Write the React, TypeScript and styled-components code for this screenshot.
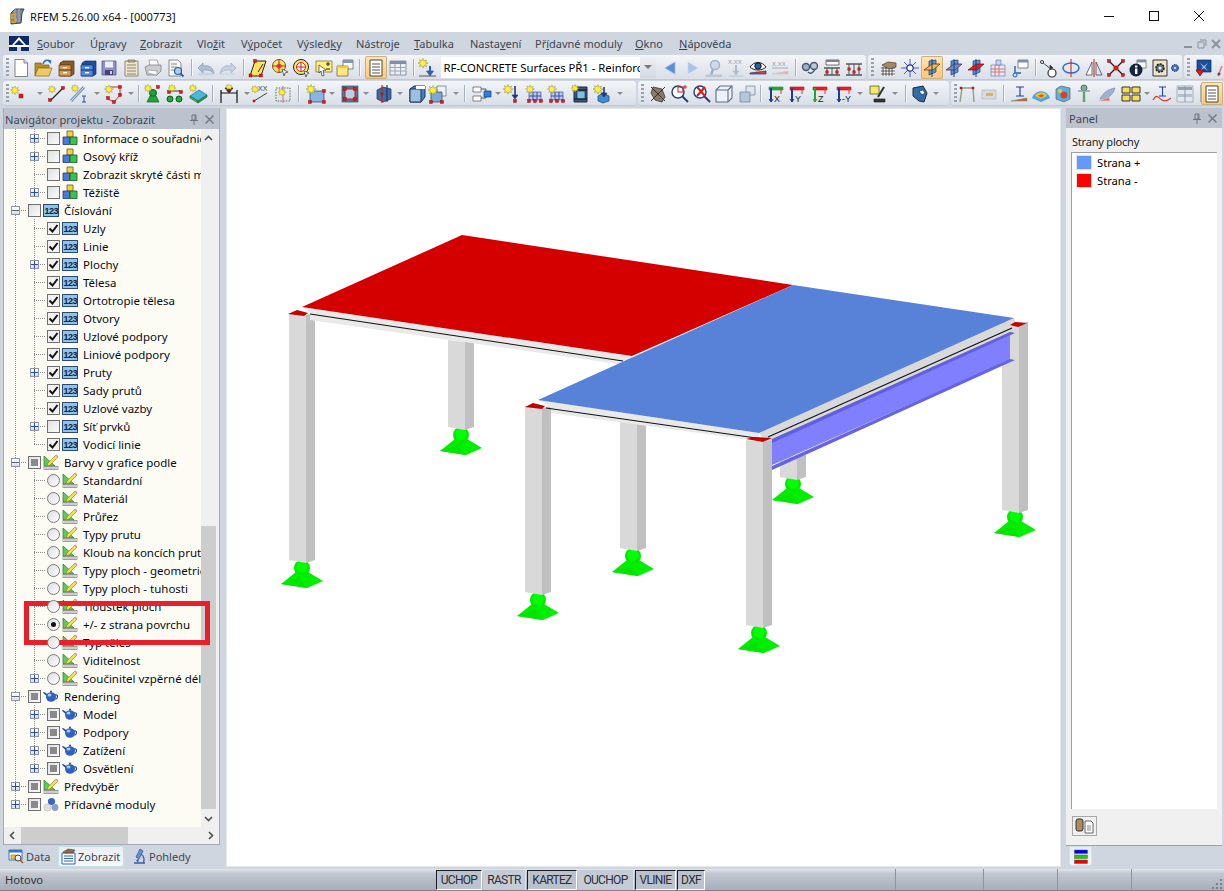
import React from "react";
import styled, { createGlobalStyle } from "styled-components";

const Global = createGlobalStyle`
  html, body { margin: 0; padding: 0; background: #cfd6e0; }
  #root { width: 1224px; height: 891px; overflow: hidden; }
  * { box-sizing: border-box; }
`;

const uiFont = `"Noto Sans", "Open Sans", "Liberation Sans", sans-serif`;

const Page = styled.div`
  position: relative;
  width: 1224px;
  height: 891px;
  display: flex;
  flex-direction: column;
  background: #cfd6e0;
  font-family: ${uiFont};
  font-size: 11.5px;
  color: #000;
  overflow: hidden;
`;

/* ---------- title bar ---------- */
const TitleBar = styled.div`
  height: 32px;
  flex: none;
  background: #fff;
  display: flex;
  align-items: center;
  padding-left: 8px;
  gap: 4px;
  font-size: 11.1px;
  color: #111;
`;
const TitleText = styled.span`
  flex: 1;
`;
const WinButtons = styled.div`
  display: flex;
  height: 100%;
  padding-right: 3px;
`;
const WinButton = styled.div`
  width: 45px;
  display: flex;
  align-items: center;
  justify-content: center;
`;

/* ---------- menu ---------- */
const MenuBar = styled.div`
  height: 23px;
  flex: none;
  position: relative;
  display: flex;
  align-items: center;
  padding-left: 9px;
  background: #cfd6e0;
  color: #3d4450;
`;
const MenuLogo = styled.div`
  width: 20px;
  height: 15px;
  margin-right: 8px;
`;
const MenuItem = styled.span<{ $w: number }>`
  width: ${(p) => p.$w}px;
  white-space: nowrap;
  font-size: 11px;
`;
const MdiControls = styled.div`
  position: absolute;
  right: 3px;
  top: 7px;
  display: flex;
  gap: 4px;
`;

/* ---------- toolbars ---------- */
const ToolRow = styled.div`
  height: 26px;
  flex: none;
  display: flex;
  overflow: hidden;
`;
const Band = styled.div<{ $w: number; $gap: number }>`
  width: ${(p) => p.$w}px;
  margin-left: ${(p) => p.$gap}px;
  flex: none;
  height: 25px;
  display: flex;
  align-items: center;
  border-radius: 3px;
  background: linear-gradient(#f3f5f8 0%, #e6eaf0 45%, #d9dee7 100%);
  box-shadow: inset 0 -1px 0 #c3c9d4;
`;
const Tool = styled.div<{ $gap: number; $active?: boolean }>`
  width: 22px;
  height: 23px;
  flex: none;
  margin-left: ${(p) => p.$gap}px;
  display: flex;
  align-items: center;
  justify-content: center;
  border-radius: 2px;
  ${(p) =>
    p.$active
      ? `background: linear-gradient(#ffe7b5, #ffc66e); box-shadow: inset 0 0 0 1px #c9b083;`
      : ""}
`;
const Sep = styled.div<{ $gap: number }>`
  width: 1px;
  height: 17px;
  flex: none;
  margin-left: ${(p) => p.$gap}px;
  background: #a9b0bd;
  box-shadow: 1px 0 0 #f6f7f9;
`;
const Caret = styled.div<{ $gap: number }>`
  width: 0;
  height: 0;
  flex: none;
  margin-left: ${(p) => p.$gap}px;
  border-left: 3.5px solid transparent;
  border-right: 3.5px solid transparent;
  border-top: 3.5px solid #8c8c8c;
`;
const Grip = styled.div<{ $gap: number }>`
  width: 3px;
  height: 20px;
  flex: none;
  margin-left: ${(p) => p.$gap}px;
  background: repeating-linear-gradient(#9aa2b0 0 2px, transparent 2px 4px);
`;
const Combo = styled.div<{ $gap: number }>`
  width: 215px;
  height: 21px;
  flex: none;
  margin-left: ${(p) => p.$gap}px;
  background: #fff;
  display: flex;
  align-items: center;
  padding-left: 3px;
  font-size: 11.3px;
  overflow: hidden;
  white-space: nowrap;
`;
const ComboText = styled.span`
  flex: 1;
  overflow: hidden;
`;
const ComboArrow = styled.div`
  width: 16px;
  height: 100%;
  flex: none;
  background: linear-gradient(#eef0f4, #d3d8e1);
  display: flex;
  align-items: center;
  justify-content: center;
`;

/* ---------- body ---------- */
const Body = styled.div`
  flex: 1;
  min-height: 0;
  display: flex;
  padding-top: 1px;
`;
const LeftCol = styled.div`
  width: 217px;
  margin-left: 3px;
  flex: none;
  display: flex;
  flex-direction: column;
`;
const DockPanel = styled.div`
  height: 737px;
  flex: none;
  display: flex;
  flex-direction: column;
  background: #f0f0f0;
  border: 1px solid #a4aab5;
  border-top-color: #bcc3cf;
`;
const DockHeader = styled.div<{ $pad: number }>`
  height: 20px;
  flex: none;
  background: #bcc3cf;
  color: #3f4650;
  display: flex;
  align-items: center;
  padding: 0 5px 0 ${(p) => p.$pad}px;
  font-size: 11.1px;
  gap: 6px;
`;
const DockTitle = styled.span`
  flex: 1;
  white-space: nowrap;
`;
const TreeArea = styled.div`
  flex: 1;
  min-height: 0;
  display: flex;
`;
const Tree = styled.div`
  width: 197px;
  flex: none;
  background: #fcfcf4;
  overflow: hidden;
`;
const VScroll = styled.div`
  width: 15px;
  flex: none;
  display: flex;
  flex-direction: column;
  align-items: stretch;
  background: #f0f0f0;
`;
const VSpace = styled.div`
  flex: 1;
`;
const ScrollThumb = styled.div`
  height: 283px;
  flex: none;
  background: #cdcdcd;
`;
const ScrollBtn = styled.div`
  height: 18px;
  flex: none;
  display: flex;
  align-items: center;
  justify-content: center;
`;
const HScroll = styled.div`
  height: 17px;
  flex: none;
  display: flex;
  align-items: center;
  background: #f0f0f0;
`;
const HBtn = styled.div`
  width: 17px;
  height: 100%;
  flex: none;
  display: flex;
  align-items: center;
  justify-content: center;
`;
const HThumb = styled.div`
  width: 107px;
  height: 100%;
  flex: none;
  background: #cdcdcd;
`;
const HSpace = styled.div`
  flex: 1;
`;

const TreeRow = styled.div`
  height: 18px;
  display: flex;
  align-items: center;
  padding-left: 2px;
  white-space: nowrap;
  overflow: hidden;
`;
const dots = `repeating-linear-gradient(#8c8c8c 0 1px, transparent 1px 2px)`;
const hdots = `repeating-linear-gradient(90deg, #8c8c8c 0 1px, transparent 1px 2px)`;
const Cell = styled.div<{ $v?: "full" | "half"; $stub?: boolean }>`
  width: 19px;
  height: 18px;
  flex: none;
  position: relative;
  display: flex;
  align-items: center;
  justify-content: center;
  &::before {
    content: "";
    position: absolute;
    left: 9px;
    top: 0;
    width: 1px;
    height: ${(p) => (p.$v === "full" ? "18px" : p.$v === "half" ? "9px" : "0")};
    background: ${dots};
  }
  &::after {
    content: "";
    position: absolute;
    left: 9px;
    top: 9px;
    width: ${(p) => (p.$stub ? "12px" : "0")};
    height: 1px;
    background: ${hdots};
  }
`;
const Expander = styled.div`
  width: 9px;
  height: 9px;
  position: relative;
  z-index: 1;
  border: 1px solid #8d96a8;
  background: linear-gradient(#fff, #d9dde6);
  display: flex;
  align-items: center;
  justify-content: center;
`;
const CheckBox = styled.div<{ $state: string }>`
  width: 13px;
  height: 13px;
  flex: none;
  margin-left: 3px;
  position: relative;
  z-index: 1;
  border: 1px solid #707070;
  background: ${(p) => (p.$state === "on" ? "#f1f1f1" : "linear-gradient(135deg,#dfe0e4,#fbfbfc)")};
  display: flex;
  align-items: center;
  justify-content: center;
`;
const IndetMark = styled.div`
  width: 7px;
  height: 7px;
  background: #8a8a8a;
`;
const Radio = styled.div`
  width: 13px;
  height: 13px;
  flex: none;
  margin-left: 3px;
  position: relative;
  z-index: 1;
  border: 1px solid #7a7a7a;
  border-radius: 50%;
  background: linear-gradient(135deg, #dcdde2, #fff);
  display: flex;
  align-items: center;
  justify-content: center;
`;
const RadioDot = styled.div`
  width: 5px;
  height: 5px;
  border-radius: 50%;
  background: #111;
`;
const NodeIcon = styled.div`
  width: 16px;
  height: 16px;
  flex: none;
  margin-left: 2px;
  display: flex;
  align-items: center;
  justify-content: center;
`;
const RowLabel = styled.span`
  margin-left: 5px;
  font-size: 11.5px;
  color: #0a0a14;
`;
const Highlight = styled.div`
  position: absolute;
  left: 24px;
  top: 601px;
  width: 186px;
  height: 44px;
  border: 5px solid #e8202c;
  pointer-events: none;
`;

const TabStrip = styled.div`
  height: 22px;
  flex: none;
  display: flex;
  align-items: center;
  padding-left: 3px;
  color: #3f4650;
  font-size: 11px;
`;
const Tab = styled.div<{ $active?: boolean; $w: number; $ml?: number }>`
  width: ${(p) => p.$w}px;
  margin-left: ${(p) => p.$ml ?? 0}px;
  height: 21px;
  flex: none;
  display: flex;
  align-items: center;
  gap: 1px;
  padding-left: 2px;
  border-radius: 0 0 4px 4px;
  ${(p) =>
    p.$active
      ? `background: linear-gradient(#e9edf2,#f7f9fa); box-shadow: inset 0 0 0 1px #c5e0e2;`
      : ""}
`;

const Canvas = styled.div`
  width: 835px;
  height: 759px;
  margin-left: 6px;
  flex: none;
  background: #fff;
  border: 1px solid #e4e7ec;
`;
const ModelSvg = styled.svg`
  display: block;
  width: 833px;
  height: 757px;
`;

const RightCol = styled.div`
  width: 156px;
  margin-left: 5px;
  flex: none;
  display: flex;
  flex-direction: column;
`;
const PanelBody = styled.div`
  height: 718px;
  flex: none;
  background: #f0f0f0;
  padding: 6px 5px 0 5px;
  display: flex;
  flex-direction: column;
  border-bottom: 1px solid #9da3ae;
`;
const PanelCaption = styled.div`
  font-size: 11px;
  height: 18px;
  color: #222;
  line-height: 16px;
  padding-left: 1px;
  letter-spacing: -0.2px;
`;
const LegendBox = styled.div`
  height: 657px;
  flex: none;
  background: #fff;
  border-top: 1px solid #a0a0a0;
  border-left: 1px solid #a0a0a0;
  padding: 0 0 0 4px;
`;
const LegendRow = styled.div`
  height: 18px;
  display: flex;
  align-items: center;
  gap: 5px;
  font-size: 11.2px;
`;
const Swatch = styled.div<{ $c: string }>`
  width: 16px;
  height: 15px;
  background: ${(p) => p.$c};
  border: 1px solid #e2e2e2;
`;
const PanelAction = styled.div`
  width: 25px;
  height: 20px;
  margin-top: 7px;
  margin-left: 1px;
  border: 1px solid #a8a8a8;
  display: flex;
  align-items: center;
  justify-content: center;
`;
const PanelTab = styled.div`
  width: 23px;
  height: 20px;
  margin-left: 3px;
  border-radius: 0 0 4px 4px;
  background: linear-gradient(#e6ebf0, #f7f9fa);
  box-shadow: inset 0 0 0 1px #cfe3e6;
  display: flex;
  align-items: center;
  justify-content: center;
`;

/* ---------- status ---------- */
const StatusBar = styled.div`
  height: 22px;
  flex: none;
  position: relative;
  display: flex;
  align-items: center;
  background: linear-gradient(#e3e6eb 0, #c3c8d1 20%, #b6bcc7 55%, #a8aeba 100%);
  border-bottom: 1px solid #7f8590;
  color: #333;
`;
const StatusText = styled.div`
  width: 436px;
  padding-left: 5px;
  flex: none;
  font-size: 11.2px;
`;
const Pane = styled.div<{ $w: number; $on?: boolean }>`
  width: ${(p) => p.$w}px;
  height: 20px;
  flex: none;
  margin-right: 1px;
  display: flex;
  align-items: center;
  justify-content: center;
  font-family: "Roboto", "Liberation Sans", sans-serif;
  font-size: 12px;
  letter-spacing: -0.7px;
  color: #2a2f38;
  ${(p) =>
    p.$on
      ? `background: #bcc2cc; border-left: 1px solid #1b1d22; border-top: 1px solid #1b1d22; border-right: 1px solid #fff; border-bottom: 1px solid #fff;`
      : `background: #c6ccd5; border-right: 1px solid #dfe2e7;`}
`;
const StatusSlot = styled.div<{ $w: number }>`
  width: ${(p) => p.$w}px;
  height: 100%;
  flex: none;
  border-right: 1px solid #8f95a0;
`;
const ResizeGrip = styled.svg`
  position: absolute;
  right: 1px;
  bottom: 1px;
`;

/* ---------- small drawings ---------- */
const Spark = ({ x = 5, y = 5, s = 1 }: { x?: number; y?: number; s?: number }) => (
  <path
    transform={`translate(${x} ${y}) scale(${s})`}
    d="M0-4.5l1 2.6 2.6-1-1 2.6L5.2 0 2.6 1.1l1 2.6-2.6-1L0 5.2l-1-2.5-2.6 1 1-2.6L-5 0l2.4-.7-1-2.6 2.6 1z"
    fill="#fff03a"
    stroke="#8a8a3a"
    strokeWidth=".5"
  />
);
const Rd = ({ x, y, s = 3 }: { x: number; y: number; s?: number }) => (
  <rect x={x - s / 2} y={y - s / 2} width={s} height={s} fill="#e01818" stroke="#7a0c0c" strokeWidth=".4" />
);
const Ln = ({ d, c = "#333", w = 1 }: { d: string; c?: string; w?: number }) => (
  <path d={d} fill="none" stroke={c} strokeWidth={w} />
);
const Fl = ({ d, c, s = "#555", w = 0.7 }: { d: string; c: string; s?: string; w?: number }) => (
  <path d={d} fill={c} stroke={s} strokeWidth={w} />
);
const cabinet = (a: string, b: string, e: string) => (
  <>
    <Fl d="M7 3h11v13l-3 2H4V5z" c={a} s={e} />
    <Fl d="M3 7h12v11H3z" c={b} s={e} />
    <Ln d="M3 12h12" c={e} />
    <rect x="7" y="9" width="4" height="1.4" fill="#fff" />
    <rect x="7" y="14" width="4" height="1.4" fill="#fff" />
  </>
);
const xyz = (a: string, b: string, l: string) => (
  <>
    <Fl d="M3 3h14v3H3z" c={a} s={a} />
    <Ln d="M5 4v14" c={b} w={2} />
    <Ln d="M5 18l-2-3M5 18l2-3" c={b} />
    <Ln d="M15 4v6" c="#e33" w={1} />
    <text x="8" y="18" fontSize="9" fontFamily="Liberation Sans, sans-serif" fill="#222">
      {l}
    </text>
  </>
);
const plane = (c: string) => (
  <>
    <Fl d="M7 3l7-1v12l-7 3z" c="#5a93d6" s="#123d7a" />
    <Fl d="M2 12l8-6h8l-7 6z" c={c} s="#7a1010" />
    <Ln d="M10 1v18" c="#1a3c80" />
  </>
);
const grid = (
  <>
    <Fl d="M4 8h12v8H4z" c="#b8c9ea" s="#3c50a8" />
    <Ln d="M8 8v8M12 8v8M4 12h12" c="#3c50a8" />
    <Rd x={4} y={17} />
    <Rd x={10} y={17} />
    <Rd x={16} y={17} />
    <Spark x={5} y={5} s={0.9} />
  </>
);

const icons: Record<string, React.ReactNode> = {
  new: (
    <>
      <Fl d="M4 1.5h9l3.5 3.5v13.5H4z" c="#fff" s="#555" />
      <Fl d="M13 1.5V5h3.5" c="#e3e3e3" s="#555" />
    </>
  ),
  open: (
    <>
      <Fl d="M2 5h6l1 2h7v3H5l-3 8z" c="#b98c2c" s="#7c5a14" />
      <Fl d="M2 18l3-8h14l-3 8z" c="#eec962" s="#8a6a1c" />
      <Ln d="M10 6c1-4 5-5 7-2" c="#2d6fc0" w={1.6} />
      <Fl d="M15 2l3 .5-.5 3z" c="#2d6fc0" s="#2d6fc0" />
    </>
  ),
  cabB: cabinet("#8a5c2c", "#d99c52", "#4a2d10"),
  cabBl: cabinet("#1e4da0", "#4f8be0", "#12306c"),
  save: (
    <>
      <Fl d="M3 3h14v14H3z" c="#8f8fcf" s="#4c4c88" />
      <rect x="6" y="3.5" width="8" height="6" fill="#eef0f8" />
      <rect x="6" y="12" width="8" height="5" fill="#44446f" />
      <rect x="11" y="13" width="2" height="3" fill="#cfd0e6" />
    </>
  ),
  notes: (
    <>
      <Fl d="M4 3h13v15H4z" c="#f1e5cb" s="#6b6252" />
      <Ln d="M6 7h9M6 10h9M6 13h9M6 16h9" c="#8a8272" />
      <Fl d="M7 2h7v2H7z" c="#bdb6a6" s="#6b6252" />
    </>
  ),
  print: (
    <>
      <Fl d="M6 2h8l2 6H7z" c="#fbfbfb" s="#8a8a8a" />
      <Fl d="M2 9l4-2h12v6l-4 4H4z" c="#cbcdd4" s="#777" />
      <Fl d="M5 12l9 1v4l-9-2z" c="#fff" s="#999" />
    </>
  ),
  preview: (
    <>
      <Fl d="M3 2h9l3 3v13H3z" c="#f6f6f6" s="#666" />
      <Ln d="M5 6h6M5 9h6M5 12h4" c="#8a8a8a" />
      <circle cx="12" cy="13" r="3.5" fill="#a8cdf0" stroke="#2f5e9c" strokeWidth="1.2" />
      <Ln d="M14.5 15.5l3 3" c="#2f5e9c" w={1.8} />
    </>
  ),
  undo: (
    <>
      <Fl d="M2 10l5-5v3c6-1 10 1 11 8-3-4-6-4-11-4v3z" c="#aebed6" s="#8496b2" />
      <Fl d="M3 15h14v2H3z" c="#c8d2e2" s="#c8d2e2" />
    </>
  ),
  redo: (
    <>
      <Fl d="M18 10l-5-5v3C7 7 3 9 2 16c3-4 6-4 11-4v3z" c="#c6d1e2" s="#9dadc6" />
      <Fl d="M3 15h14v2H3z" c="#d3dbe7" s="#d3dbe7" />
    </>
  ),
  para: (
    <>
      <Fl d="M7 3h11l-5 15H2z" c="#ffe35c" s="#222" w={1} />
      <Ln d="M10 14l5-8" c="#222" />
      <Rd x={7} y={3} />
      <Rd x={2.5} y={17.5} />
      <Rd x={13} y={17.5} />
    </>
  ),
  t1: (
    <>
      <circle cx="9" cy="8" r="6.5" fill="#ffe46a" stroke="#6a5c1a" />
      <circle cx="9" cy="8" r="2.5" fill="#f05050" />
      <Ln d="M9 1v14M2 8h14" c="#c82020" />
      <Fl d="M12 11l6 3-3 1-1 3z" c="#fff" s="#333" />
    </>
  ),
  t2: (
    <>
      <circle cx="9" cy="9" r="7.5" fill="#ffe46a" stroke="#222" />
      <circle cx="9" cy="9" r="4.5" fill="#fff" stroke="#c82020" />
      <Ln d="M9 5v8M5 9h8" c="#c82020" />
      <Fl d="M12 13l5 2-2 1-1 3z" c="#fff" s="#333" />
    </>
  ),
  curBox: (
    <>
      <Fl d="M2 3h16v11H2z" c="#ffee7a" s="#77691c" />
      <Ln d="M12 6h4M14 4v4M12 11h4" c="#222" />
      <Fl d="M5 7l7 5-3 .5 1 5-2 .5-1-5-2 2z" c="#fff" s="#333" />
    </>
  ),
  win: (
    <>
      <Fl d="M8 2h10v9H8z" c="#fff" s="#555" />
      <rect x="8" y="2" width="10" height="3" fill="#8397b2" />
      <Fl d="M2 8h11v10H2z" c="#ffe87a" s="#6a5c1a" />
      <rect x="2" y="8" width="11" height="2" fill="#e8c84a" />
    </>
  ),
  doc: (
    <>
      <Fl d="M4 2h12v16H4z" c="#fff" s="#444" w={1} />
      <Ln d="M6 6h8M6 9h8M6 12h8M6 15h8" c="#555" />
    </>
  ),
  table: (
    <>
      <Fl d="M2 3h16v14H2z" c="#eef0f4" s="#6a7484" />
      <rect x="2" y="3" width="16" height="3" fill="#7f8fa8" />
      <Ln d="M7 6v11M12.5 6v11M2 9.5h16M2 13h16" c="#9aa4b4" />
    </>
  ),
  starDown: (
    <>
      <Spark x={6} y={5} />
      <Ln d="M13 8v8" c="#2b5fb0" w={2} />
      <Fl d="M9.5 13h7L13 18z" c="#2b5fb0" s="#2b5fb0" />
      <Ln d="M2 18h17" c="#555" />
    </>
  ),
  left: <Fl d="M15 4v12L5 10z" c="#5c8edc" s="#9ab9ea" />,
  right: <Fl d="M6 4v12l10-6z" c="#a9c3ea" s="#c9d9f2" />,
  paleP: (
    <>
      <circle cx="11" cy="7" r="4.5" fill="#cfd9e8" stroke="#9fb0c8" strokeWidth="1.4" />
      <Ln d="M9 11l-2 6" c="#9fb0c8" w={2.4} />
      <Fl d="M2 17h16v1.5H2z" c="#b9c4d4" s="#b9c4d4" />
    </>
  ),
  paleX: (
    <>
      <text x="2" y="6" fontSize="6" fontFamily="Liberation Sans, sans-serif" fill="#8f99a8">
        X.XX
      </text>
      <Ln d="M10 7v9" c="#b0bccd" w={2} />
      <Fl d="M7 13h6l-3 4z" c="#b0bccd" s="#b0bccd" />
      <Ln d="M3 18h14" c="#b9c4d4" />
    </>
  ),
  eye: (
    <>
      <path d="M2 9c4-6 12-6 16 0-4 4-12 4-16 0z" fill="#fff" stroke="#222" />
      <circle cx="10" cy="8" r="3.2" fill="#2b5fb0" stroke="#111" />
      <Fl d="M2 15l16-2v3H2z" c="#e04040" s="#2b2b6a" />
    </>
  ),
  paleXx: (
    <>
      <text x="2" y="8" fontSize="6" fontFamily="Liberation Sans, sans-serif" fill="#8f99a8">
        X.XX
      </text>
      <Ln d="M2 10h16" c="#a8a8b4" />
      <Fl d="M2 16l16-3v3z" c="#e7b2b2" s="#ccc" />
    </>
  ),
  glass: (
    <>
      <circle cx="6" cy="9" r="3.5" fill="#9fb2c9" stroke="#48566c" strokeWidth="1.4" />
      <circle cx="14" cy="8" r="3.5" fill="#bdc9d8" stroke="#48566c" strokeWidth="1.4" />
      <Ln d="M8 14c2 2 5 2 7-3" c="#48566c" w={1.4} />
    </>
  ),
  bar1: (
    <>
      <Fl d="M4 2h13v5H4z" c="#fff" s="#333" />
      <rect x="4" y="2" width="13" height="2" fill="#75849c" />
      <Ln d="M2 10h16M2 17h16" c="#111" w={1.2} />
      <Ln d="M5 10v7M10 10v7M15 10v7" c="#555" />
      <Rd x={5} y={14} s={2.4} />
      <Rd x={15} y={14} s={2.4} />
    </>
  ),
  bar2: (
    <>
      <Ln d="M2 6h16M2 17h16" c="#111" w={1.2} />
      <Ln d="M5 6v11M10 6v11M15 6v11" c="#555" />
      <Rd x={5} y={11} s={2.4} />
      <Rd x={10} y={14} s={2.4} />
      <Rd x={15} y={11} s={2.4} />
    </>
  ),
  hand: (
    <>
      <path d="M3 9h14v9H3z" fill="#fff" />
      <Ln d="M3 10h14M3 13h14M3 16h14" c="#333" w={0.8} />
      <Ln d="M5 9v9M8 9v9M11 9v9M14 9v9" c="#333" w={0.8} />
      <Fl d="M4 7l6-3 8 1v4l-7 2z" c="#a9866a" s="#4c3a2a" />
    </>
  ),
  cross: (
    <>
      <Ln d="M10 1v18M1 10h18M4 4l12 12M16 4L4 16" c="#2a3ea0" w={0.8} />
      <circle cx="10" cy="10" r="3.2" fill="#fff" stroke="#1e2f90" strokeWidth="1.2" />
    </>
  ),
  planeA: plane("#e8c040"),
  planeB: plane("#5a93d6"),
  planeC: plane("#e02020"),
  gridz: (
    <>
      <Fl d="M3 7h14v11H3z" c="#e4eaf6" s="#5d7ec2" />
      <Ln d="M7 7v11M11 7v11M3 11h14M3 14h14" c="#e07070" />
      <Fl d="M8 2h5v5H8z" c="#c4d4ec" s="#5d7ec2" />
    </>
  ),
  link: (
    <>
      <Fl d="M8 2h10v8H8z" c="#fff" s="#555" />
      <rect x="8" y="2" width="10" height="2.5" fill="#7f8fa8" />
      <Ln d="M5 8v7h6" c="#2b5fb0" w={1.4} />
      <circle cx="5" cy="17" r="2" fill="#cfe0f5" stroke="#2b5fb0" />
    </>
  ),
  nodes: (
    <>
      <Ln d="M3 4l10 8" c="#333" w={0.9} />
      <circle cx="3" cy="4" r="1.5" fill="#fff" stroke="#333" />
      <Fl d="M11 7l3 3-3 1z" c="#333" s="#333" />
      <circle cx="13" cy="15" r="4" fill="#fff" stroke="#333" strokeWidth="1.2" />
    </>
  ),
  rot: (
    <>
      <ellipse cx="10" cy="10" rx="8" ry="5" fill="none" stroke="#2b6fc0" strokeWidth="1.5" />
      <Ln d="M10 1v18" c="#d01818" w={1} />
    </>
  ),
  mirror: (
    <>
      <Fl d="M8 4v13H2z" c="#fff" s="#333" />
      <Fl d="M12 4v13h6z" c="#dfe4ec" s="#333" />
      <Ln d="M10 1v18" c="#d01818" w={1} />
    </>
  ),
  xmark: (
    <>
      <Ln d="M3 3l14 14M17 3L3 17" c="#222" w={1.4} />
      <circle cx="10" cy="10" r="2.6" fill="#e01818" />
      <Rd x={3} y={3} />
      <Rd x={17} y={3} />
      <Rd x={3} y={17} />
      <Rd x={17} y={17} />
    </>
  ),
  info: (
    <>
      <Fl d="M9 2h9v8H9z" c="#fff" s="#555" />
      <rect x="9" y="2" width="9" height="2.4" fill="#7f8fa8" />
      <circle cx="8" cy="12" r="6.5" fill="#12243e" />
      <rect x="7" y="10.5" width="2.4" height="5.5" fill="#fff" />
      <rect x="7" y="7.5" width="2.4" height="2" fill="#fff" />
    </>
  ),
  gear: (
    <>
      <Fl d="M3 2h14v16H3z" c="#efe3c8" s="#333" w={1} />
      <circle cx="10" cy="10" r="4" fill="#5d6f88" stroke="#222" strokeWidth="1.6" strokeDasharray="2 1" />
      <circle cx="10" cy="10" r="1.5" fill="#fff" />
    </>
  ),
  dotgear: (
    <>
      <circle cx="7" cy="10" r="3.5" fill="#4a6fbe" stroke="#1e3a80" strokeDasharray="1.5 1" />
      <circle cx="7" cy="10" r="1" fill="#fff" />
    </>
  ),
  blueSq: (
    <>
      <Fl d="M4 2h14v12H4z" c="#18509c" s="#0c2d60" />
      <path d="M7 5l4 3 4-3-3 4 3 4-4-3-4 3 3-4z" fill="#9cc4ee" />
      <Fl d="M3 12h8l-4 6z" c="#e01818" s="#7a0c0c" />
    </>
  ),
  edge: (
    <>
      <Ln d="M6 18l4-10" c="#b88" w={1.4} />
      <Rd x={7} y={16} s={2} />
    </>
  ),
  node: (
    <>
      <Spark x={5} y={6} s={0.9} />
      <Rd x={11} y={12} s={4} />
    </>
  ),
  line: (
    <>
      <Ln d="M4 17L17 4" c="#222" w={1.2} />
      <Rd x={4} y={16} />
      <Rd x={17} y={4} />
      <Spark x={6} y={5} s={0.8} />
    </>
  ),
  bar: (
    <>
      <Ln d="M2 17L15 3" c="#7890b0" w={3} />
      <Ln d="M2 17L15 3" c="#dfe8f4" w={1} />
      <Ln d="M13 12h4M15 12v6M13 18h4" c="#30489c" w={1} />
      <Spark x={6} y={4} s={0.8} />
    </>
  ),
  poly: (
    <>
      <Ln d="M6 3h10v8l-6 7-6-3" c="#c83030" w={1} />
      <Rd x={16} y={3} />
      <Rd x={16} y={11} />
      <Rd x={10} y={18} />
      <Rd x={4} y={14} />
      <Spark x={5} y={5} s={0.9} />
    </>
  ),
  person: (
    <>
      <circle cx="10" cy="9" r="3.5" fill="#1fa53a" stroke="#0c5a1c" />
      <Fl d="M4 18l3-6h6l3 6z" c="#1fa53a" s="#0c5a1c" />
      <Spark x={5} y={4} s={0.8} />
      <Rd x={15} y={3} s={3} />
    </>
  ),
  three: (
    <>
      <Ln d="M4 7h11" c="#333" />
      <Rd x={4} y={8} />
      <Rd x={16} y={8} />
      <circle cx="5" cy="15" r="3" fill="#26a83e" stroke="#0c5a1c" />
      <circle cx="14" cy="15" r="3" fill="#26a83e" stroke="#0c5a1c" />
      <Spark x={7} y={4} s={0.8} />
    </>
  ),
  surfSup: (
    <>
      <Fl d="M2 12l9-6 8 5-9 6z" c="#49b9e0" s="#1e6a8a" />
      <Fl d="M2 12l8 5v2l-8-5z" c="#3cbc50" s="#1e6a3a" />
      <Fl d="M10 17l9-6v2l-9 6z" c="#2d9c40" s="#1e6a3a" />
      <Spark x={5} y={4} s={0.8} />
    </>
  ),
  dim: (
    <>
      <Ln d="M2 6v13M18 6v13" c="#111" w={1.2} />
      <Ln d="M2 9h16" c="#111" />
      <Fl d="M6 4h8l-4 5z" c="#222" s="#222" />
      <Spark x={10} y={3} s={0.7} />
      <Rd x={10} y={6} s={2} />
    </>
  ),
  xxd: (
    <>
      <text x="7" y="7" fontSize="7" fontFamily="Liberation Sans, sans-serif" fill="#444">
        XX
      </text>
      <Ln d="M3 17L16 9" c="#444" w={1} />
      <Spark x={4} y={5} s={0.8} />
      <Rd x={3} y={17} s={2} />
    </>
  ),
  dotted: (
    <>
      <rect x="3" y="4" width="14" height="13" fill="none" stroke="#6a6a5a" strokeDasharray="1.5 1.2" />
      <Ln d="M10 2v17" c="#a67" w={0.8} />
      <Spark x={9} y={8} s={0.8} />
    </>
  ),
  surf: (
    <>
      <Fl d="M4 7h14v11H4z" c="#8cb4e2" s="#25446e" />
      <Rd x={4} y={18} />
      <Rd x={18} y={18} />
      <Rd x={18} y={7} />
      <Spark x={5} y={5} />
    </>
  ),
  redSq: (
    <>
      <Fl d="M2 2h16v16H2z" c="#5a7594" s="#3a4f68" />
      <Fl d="M5 5h10v10H5z" c="#bcd0e6" s="#c02020" w={1} />
      <Rd x={5} y={5} />
      <Rd x={15} y={5} />
      <Rd x={5} y={15} />
      <Rd x={15} y={15} />
    </>
  ),
  arrowsCube: (
    <>
      <Fl d="M3 6l6-3 8 2v10l-8 3-6-3z" c="#3f6a9a" s="#21344e" />
      <Ln d="M8 1v18" c="#d02020" w={1.2} />
      <Ln d="M13 1v17" c="#1e3a80" w={1.2} />
      <Rd x={8} y={10} s={2} />
    </>
  ),
  cube: (
    <>
      <Fl d="M3 5l4-3h11v11l-4 5H3z" c="#3f82c0" s="#1a3552" w={1} />
      <Fl d="M3 5h11v13H3z" c="#9cc0e2" s="#1a3552" w={1} />
      <rect x="9" y="2" width="9" height="3" fill="#fff" />
    </>
  ),
  stack: (
    <>
      <Fl d="M9 2h9v10H9z" c="#eef2f8" s="#5a6a80" />
      <Fl d="M3 8h11v10H3z" c="#7ea8d6" s="#243f60" />
      <Rd x={3} y={18} />
      <Rd x={14} y={18} />
      <Spark x={5} y={6} />
    </>
  ),
  trans: (
    <>
      <Fl d="M1 3h8v5H1z" c="#fff" s="#555" />
      <Fl d="M1 12h8v5H1z" c="#fff" s="#555" />
      <Ln d="M9 5h5v9H9" c="#555" />
      <Fl d="M12 7h7v6h-7z" c="#2f7fd6" s="#15427e" />
    </>
  ),
  starArrow: (
    <>
      <Spark x={6} y={5} />
      <Ln d="M13 2v12" c="#1e3a80" w={1.6} />
      <Fl d="M10 11h6l-3 4z" c="#1e3a80" s="#1e3a80" />
      <Rd x={13} y={17} />
    </>
  ),
  gridA: grid,
  gridB: grid,
  machine: (
    <>
      <Fl d="M4 3h13v15H4z" c="#3d5878" s="#1d2c40" w={1} />
      <Fl d="M7 7h8v8H7z" c="#7fc0ea" s="#1d2c40" />
      <Ln d="M4 6h13M4 15h13" c="#111" />
      <Spark x={5} y={4} s={0.8} />
    </>
  ),
  tank: (
    <>
      <Fl d="M6 12l5-3 6 3v5l-6 2-5-2z" c="#3e8ed0" s="#1a4470" />
      <Ln d="M12 3v9" c="#1e3a80" w={1.6} />
      <Fl d="M9 9h6l-3 4z" c="#1e3a80" s="#1e3a80" />
      <Spark x={6} y={5} />
    </>
  ),
  handTool: (
    <>
      <Fl d="M5 3l9 2 3 8-3 5-7-2-4-7z" c="#8a7a66" s="#2a2a2a" />
      <Ln d="M3 3l14 14M17 3L3 17" c="#333" w={1} />
    </>
  ),
  zoomBox: (
    <>
      <circle cx="8" cy="8" r="6" fill="#fff" stroke="#1e3f7a" strokeWidth="1.4" />
      <Ln d="M12 12l6 6" c="#1e3f7a" w={2} />
      <rect x="8" y="3" width="5" height="5" fill="none" stroke="#d02020" />
      <Ln d="M15 1v4M13 3h4" c="#d02020" />
    </>
  ),
  zoomX: (
    <>
      <circle cx="8" cy="8" r="6" fill="#fff" stroke="#1e3f7a" strokeWidth="1.4" />
      <Ln d="M12 12l6 6" c="#1e3f7a" w={2} />
      <Ln d="M5 3l8 9M13 3l-8 9" c="#d81818" w={2} />
    </>
  ),
  wire: (
    <>
      <Fl d="M2 6l4-4h12v12l-4 4H2z" c="#eef2f8" s="#5a6f8a" w={1.1} />
      <Ln d="M2 6h12v12M14 6l4-4" c="#5a6f8a" w={1.1} />
    </>
  ),
  cubes: (
    <>
      <Fl d="M9 2h9v9H9z" c="#dfe5ee" s="#6a7f9a" />
      <Fl d="M3 8h10v10H3z" c="#b4c5dc" s="#6a7f9a" />
    </>
  ),
  axX: xyz("#18a83c", "#1e3a9c", "X"),
  axY: xyz("#d82020", "#1e3a9c", "Y"),
  axZ: xyz("#d82020", "#18a83c", "Z"),
  axmY: xyz("#d82020", "#1e3a9c", "-Y"),
  micro: (
    <>
      <Fl d="M2 2h9v8H2z" c="#f7ea5c" s="#444" />
      <Ln d="M16 3l-6 10" c="#333" w={2} />
      <Fl d="M6 15h11v3H6z" c="#333" s="#222" />
    </>
  ),
  blueShape: (
    <>
      <Fl d="M3 4l10-2 4 7-3 9-5-1-6-5z" c="#2f6ca8" s="#12304e" w={1} />
      <Fl d="M9 7l4-1 2 3-3 2z" c="#fff" s="#12304e" />
    </>
  ),
  paleFrame: (
    <>
      <Ln d="M4 18L6 4h11l1 14" c="#8ea084" w={1.4} />
      <Rd x={5} y={4} s={2} />
      <Rd x={17} y={4} s={2} />
    </>
  ),
  paleTag: (
    <>
      <Fl d="M3 6h14v9H3z" c="#d7d9de" s="#b4b8c0" />
      <rect x="7" y="9" width="7" height="3" fill="#e0b060" />
    </>
  ),
  iBeam: (
    <>
      <Ln d="M7 3h8M11 3v9M7 12h8" c="#2a3ea0" w={1.2} />
      <Fl d="M2 17l16-3v3z" c="#e05050" s="#3a5" w={0.5} />
    </>
  ),
  mesh: (
    <>
      <path d="M1 14c3-9 15-9 18 0l-9 4z" fill="#49a6e0" />
      <path d="M4 12c3-5 10-5 12 0l-6 3z" fill="#e8c23c" />
      <path d="M7 12c2-2 5-2 6 0l-3 1.5z" fill="#e05038" />
    </>
  ),
  colorCube: (
    <>
      <Fl d="M3 5l5-3 9 2v11l-6 3-8-3z" c="#5fb0d8" s="#567" />
      <circle cx="11" cy="11" r="3.5" fill="#d84030" />
      <circle cx="7" cy="7" r="2" fill="#e0d040" />
    </>
  ),
  greenFig: (
    <>
      <circle cx="9" cy="4" r="3" fill="#7fb08a" stroke="#567" />
      <Ln d="M9 8v10" c="#58a868" w={2.4} />
      <Ln d="M3 7l12 0" c="#8a9aa8" w={1.4} />
    </>
  ),
  leaf: (
    <>
      <Fl d="M3 15c4-8 10-10 15-11-2 7-7 11-15 11z" c="#9fb2d6" s="#7a8cae" />
      <Fl d="M2 17l10-4 1 4z" c="#e07878" s="#ccc" />
    </>
  ),
  foursq: (
    <>
      <Fl d="M1 3h8v6H1z" c="#f6df58" s="#333" w={1} />
      <Fl d="M11 3h8v6h-8z" c="#f6df58" s="#333" w={1} />
      <Fl d="M1 11h8v6H1z" c="#f6df58" s="#333" w={1} />
      <Fl d="M11 11h8v6h-8z" c="#f6df58" s="#333" w={1} />
    </>
  ),
  iWave: (
    <>
      <Ln d="M7 3h7M10.5 3v9M7 12h7" c="#2a3ea0" w={1.1} />
      <Ln d="M1 16c4-7 5-2 9 0 4 2 6 0 9-2" c="#d83030" w={1.1} />
    </>
  ),
  tbl2: (
    <>
      <Fl d="M2 2h16v16H2z" c="#e4e8ee" s="#8f99a8" />
      <rect x="3" y="3" width="14" height="3" fill="#94a2b6" />
      <rect x="3" y="10" width="14" height="3" fill="#b4becd" />
      <Ln d="M10 2v16" c="#8f99a8" />
    </>
  ),
};

type Item = [string, number];
type BandDef = { left: number; right: number; items: Item[] };

const sizes: Record<string, number> = { sep: 1, caret: 7, grip: 3, combo: 215 };

const r1: BandDef[] = [
  {
    left: 3,
    right: 866,
    items: [
      ["grip", 7], ["new", 21], ["open", 43], ["cabB", 66], ["cabBl", 88], ["save", 109], ["notes", 131], ["print", 153], ["preview", 176],
      ["sep", 191], ["undo", 206], ["redo", 228], ["sep", 243], ["para", 258], ["t1", 280], ["t2", 302], ["curBox", 324], ["win", 345],
      ["sep", 359], ["*doc", 376], ["table", 398], ["sep", 413], ["starDown", 427], ["combo", 548], ["left", 670], ["right", 692],
      ["paleP", 714], ["paleX", 736], ["eye", 758], ["paleXx", 780], ["sep", 795], ["glass", 810], ["bar1", 832], ["bar2", 854],
    ],
  },
  {
    left: 868,
    right: 1182,
    items: [
      ["grip", 872], ["hand", 888], ["cross", 910], ["*planeA", 932], ["planeB", 954], ["planeC", 976], ["gridz", 998], ["link", 1020],
      ["sep", 1035], ["nodes", 1049], ["rot", 1071], ["mirror", 1094], ["xmark", 1116], ["info", 1138], ["gear", 1160], ["dotgear", 1178],
    ],
  },
  {
    left: 1184,
    right: 1224,
    items: [["grip", 1188], ["blueSq", 1203], ["edge", 1222]],
  },
];
const r2: BandDef[] = [
  {
    left: 3,
    right: 636,
    items: [
      ["grip", 7], ["node", 20], ["caret", 40], ["line", 57], ["bar", 80], ["caret", 98], ["poly", 116], ["caret", 133], ["sep", 141],
      ["person", 156], ["three", 178], ["surfSup", 201], ["sep", 215], ["dim", 232], ["caret", 250], ["xxd", 265], ["dotted", 287], ["sep", 302],
      ["surf", 320], ["caret", 336], ["redSq", 355], ["caret", 371], ["arrowsCube", 390], ["caret", 406], ["cube", 424], ["stack", 445], ["caret", 463],
      ["sep", 472], ["trans", 490], ["caret", 506], ["starArrow", 521], ["gridA", 544], ["gridB", 566], ["machine", 589], ["tank", 611], ["caret", 629],
    ],
  },
  {
    left: 638,
    right: 949,
    items: [
      ["grip", 642], ["handTool", 658], ["zoomBox", 680], ["zoomX", 702], ["wire", 724], ["cubes", 747], ["sep", 760], ["axX", 776], ["axY", 797],
      ["axZ", 820], ["axmY", 844], ["caret", 860], ["micro", 879], ["caret", 896], ["sep", 907], ["blueShape", 922], ["caret", 938],
    ],
  },
  {
    left: 951,
    right: 1224,
    items: [
      ["grip", 955], ["paleFrame", 966], ["paleTag", 989], ["sep", 1003], ["iBeam", 1019], ["mesh", 1041], ["colorCube", 1063], ["greenFig", 1085],
      ["leaf", 1107], ["foursq", 1131], ["caret", 1147], ["iWave", 1163], ["tbl2", 1186], ["sep", 1201], ["*doc", 1213],
    ],
  },
];

const Ico = ({ k }: { k: string }) => (
  <svg width="20" height="20" viewBox="0 0 20 20">
    {icons[k]}
  </svg>
);

const ToolBand = ({ def, prevRight }: { def: BandDef; prevRight: number }) => {
  let cursor = def.left;
  return (
    <Band $w={def.right - def.left} $gap={def.left - prevRight}>
      {def.items.map(([name, center], i) => {
        const base = name.replace("*", "");
        const w = sizes[base] ?? 22;
        const gap = center - w / 2 - cursor;
        cursor = center + w / 2;
        if (base === "sep") return <Sep key={i} $gap={gap} />;
        if (base === "caret") return <Caret key={i} $gap={gap} />;
        if (base === "grip") return <Grip key={i} $gap={gap} />;
        if (base === "combo")
          return (
            <Combo key={i} $gap={gap}>
              <ComboText>RF-CONCRETE Surfaces PŘ1 - Reinforce</ComboText>
              <ComboArrow>
                <svg width="8" height="5">
                  <path d="M0 0h8L4 4z" fill="#777" />
                </svg>
              </ComboArrow>
            </Combo>
          );
        return (
          <Tool key={i} $gap={gap} $active={name.startsWith("*")}>
            <Ico k={base} />
          </Tool>
        );
      })}
    </Band>
  );
};

const ToolRowView = ({ bands }: { bands: BandDef[] }) => (
  <ToolRow>
    {bands.map((b, i) => (
      <ToolBand key={i} def={b} prevRight={i ? bands[i - 1].right : 0} />
    ))}
  </ToolRow>
);

/* tree icons */
const CubesIcon = () => (
  <svg width="16" height="16" viewBox="0 0 16 16">
    <path d="M5 1h6v6H5z" fill="#f4d040" stroke="#6a5c1a" strokeWidth=".8" />
    <path d="M1 7h6.5v7.5H1z" fill="#4c78d8" stroke="#1c3a80" strokeWidth=".8" />
    <path d="M8 7h7v7.5H8z" fill="#3ec050" stroke="#155c22" strokeWidth=".8" />
  </svg>
);
const NumIcon = () => (
  <svg width="16" height="13" viewBox="0 0 16 13">
    <rect x=".5" y=".5" width="15" height="12" fill="#8cc4ee" stroke="#2c4a70" />
    <text x="1.6" y="10" fontSize="9" fontWeight="700" fontFamily="Liberation Sans, sans-serif" fill="#123" letterSpacing="-.5">
      123
    </text>
  </svg>
);
const ChartIcon = () => (
  <svg width="16" height="16" viewBox="0 0 16 16">
    <path d="M1 12V2l11 10z" fill="#5fc85a" stroke="#2a7a2a" strokeWidth=".7" />
    <path d="M5 9l8-8 2 2-8 8-3 1z" fill="#f4e04a" stroke="#8a7a20" strokeWidth=".6" />
    <path d="M13 1l2 2" stroke="#e090c0" strokeWidth="1.4" />
    <rect x="1" y="12.5" width="14" height="3" fill="#fff" stroke="#777" strokeWidth=".7" />
    <path d="M3 13v2M5 13v2M7 13v2M9 13v2M11 13v2M13 13v2" stroke="#555" strokeWidth=".6" />
  </svg>
);
const TeapotIcon = () => (
  <svg width="16" height="14" viewBox="0 0 16 14">
    <ellipse cx="8" cy="8" rx="5" ry="4.8" fill="#2e62c0" />
    <ellipse cx="6.5" cy="6" rx="2" ry="1.6" fill="#a9c8f4" />
    <path d="M3.5 7C1 4 .5 5 0 3c2 0 3 1 4.5 2.5z" fill="#1f4aa0" />
    <path d="M12 6c3-1 3.5 3 .5 4.5" fill="none" stroke="#1f4aa0" strokeWidth="1.3" />
    <circle cx="8" cy="2.5" r="1" fill="#1f4aa0" />
  </svg>
);
const ModulesIcon = () => (
  <svg width="16" height="15" viewBox="0 0 16 15">
    <circle cx="8.5" cy="4.5" r="3.6" fill="#3a66c4" />
    <circle cx="4.5" cy="10.5" r="3.6" fill="#dfe0e4" stroke="#aaa" strokeWidth=".5" />
    <circle cx="12" cy="10.5" r="3.4" fill="#8aa0c8" />
  </svg>
);
const treeIcons: Record<string, React.ReactNode> = {
  c: <CubesIcon />,
  n: <NumIcon />,
  b: <ChartIcon />,
  t: <TeapotIcon />,
  m: <ModulesIcon />,
};

type Node = {
  label: string;
  d: 0 | 1;
  ic: string;
  st: string;
  ex?: "+" | "-";
  last?: boolean;
};

const nodes: Node[] = [
  { label: "Informace o souřadnicích", d: 1, ic: "c", st: "off", ex: "+" },
  { label: "Osový kříž", d: 1, ic: "c", st: "off", ex: "+" },
  { label: "Zobrazit skryté části modelu", d: 1, ic: "c", st: "off" },
  { label: "Těžiště", d: 1, ic: "c", st: "off", ex: "+", last: true },
  { label: "Číslování", d: 0, ic: "n", st: "off", ex: "-" },
  { label: "Uzly", d: 1, ic: "n", st: "on" },
  { label: "Linie", d: 1, ic: "n", st: "on" },
  { label: "Plochy", d: 1, ic: "n", st: "on", ex: "+" },
  { label: "Tělesa", d: 1, ic: "n", st: "on" },
  { label: "Ortotropie tělesa", d: 1, ic: "n", st: "on" },
  { label: "Otvory", d: 1, ic: "n", st: "on" },
  { label: "Uzlové podpory", d: 1, ic: "n", st: "on" },
  { label: "Liniové podpory", d: 1, ic: "n", st: "on" },
  { label: "Pruty", d: 1, ic: "n", st: "on", ex: "+" },
  { label: "Sady prutů", d: 1, ic: "n", st: "on" },
  { label: "Uzlové vazby", d: 1, ic: "n", st: "on" },
  { label: "Síť prvků", d: 1, ic: "n", st: "off", ex: "+" },
  { label: "Vodicí linie", d: 1, ic: "n", st: "on", last: true },
  { label: "Barvy v grafice podle", d: 0, ic: "b", st: "mix", ex: "-" },
  { label: "Standardní", d: 1, ic: "b", st: "radio" },
  { label: "Materiál", d: 1, ic: "b", st: "radio" },
  { label: "Průřez", d: 1, ic: "b", st: "radio" },
  { label: "Typy prutu", d: 1, ic: "b", st: "radio" },
  { label: "Kloub na koncích prutů", d: 1, ic: "b", st: "radio" },
  { label: "Typy ploch - geometrie", d: 1, ic: "b", st: "radio" },
  { label: "Typy ploch - tuhosti", d: 1, ic: "b", st: "radio" },
  { label: "Tloušťek ploch", d: 1, ic: "b", st: "radio" },
  { label: "+/- z strana povrchu", d: 1, ic: "b", st: "dot" },
  { label: "Typ těles", d: 1, ic: "b", st: "radio" },
  { label: "Viditelnost", d: 1, ic: "b", st: "radio" },
  { label: "Součinitel vzpěrné délky", d: 1, ic: "b", st: "radio", ex: "+", last: true },
  { label: "Rendering", d: 0, ic: "t", st: "mix", ex: "-" },
  { label: "Model", d: 1, ic: "t", st: "mix", ex: "+" },
  { label: "Podpory", d: 1, ic: "t", st: "mix", ex: "+" },
  { label: "Zatížení", d: 1, ic: "t", st: "mix", ex: "+" },
  { label: "Osvětlení", d: 1, ic: "t", st: "mix", ex: "+", last: true },
  { label: "Předvýběr", d: 0, ic: "b", st: "mix", ex: "+" },
  { label: "Přídavné moduly", d: 0, ic: "m", st: "mix", ex: "+", last: true },
];

const ExpBox = ({ sign }: { sign: "+" | "-" }) => (
  <Expander>
    <svg width="7" height="7" viewBox="0 0 7 7">
      <path d={sign === "+" ? "M0 3.5h7M3.5 0v7" : "M0 3.5h7"} stroke={sign === "+" ? "#2a4ca8" : "#5a6478"} strokeWidth="1" />
    </svg>
  </Expander>
);

const StateMark = ({ st }: { st: string }) => {
  if (st === "radio") return <Radio />;
  if (st === "dot")
    return (
      <Radio>
        <RadioDot />
      </Radio>
    );
  return (
    <CheckBox $state={st}>
      {st === "on" && (
        <svg width="11" height="11" viewBox="0 0 11 11">
          <path d="M1.5 5.5l3 3 5-6.5" fill="none" stroke="#111" strokeWidth="2" />
        </svg>
      )}
      {st === "mix" && <IndetMark />}
    </CheckBox>
  );
};

const TreeNode = ({ n }: { n: Node }) => (
  <TreeRow>
    {n.d === 1 ? (
      <>
        <Cell $v="full" />
        <Cell $v={n.last ? "half" : "full"} $stub>
          {n.ex && <ExpBox sign={n.ex} />}
        </Cell>
      </>
    ) : (
      <Cell $v={n.last ? "half" : "full"} $stub>
        {n.ex && <ExpBox sign={n.ex} />}
      </Cell>
    )}
    <StateMark st={n.st} />
    <NodeIcon>{treeIcons[n.ic]}</NodeIcon>
    <RowLabel>{n.label}</RowLabel>
  </TreeRow>
);

const Pin = ({ c = "#6f7682" }: { c?: string }) => (
  <svg width="10" height="11" viewBox="0 0 10 11">
    <path d="M3 1h4v5H3zM1 6.500h8M5 7v4M6 1v5" fill="none" stroke={c} strokeWidth="1" />
  </svg>
);
const Close = ({ c = "#6f7682" }: { c?: string }) => (
  <svg width="9" height="9" viewBox="0 0 9 9">
    <path d="M.5.5l8 8M8.5.5l-8 8" stroke={c} strokeWidth="1.3" />
  </svg>
);
const Chev = ({ d }: { d: string }) => (
  <svg width="9" height="9" viewBox="0 0 9 9">
    <path d={d} fill="none" stroke="#505050" strokeWidth="1.6" />
  </svg>
);

/* 3D model, in page coordinates */
type Col = { x: number; top: number; bottom: number; ball: number };
const cols: Col[] = [
  { x: 289, top: 313, bottom: 560, ball: 568 },
  { x: 448, top: 340, bottom: 427, ball: 435 },
  { x: 525, top: 406, bottom: 592, ball: 600 },
  { x: 620, top: 420, bottom: 548, ball: 556 },
  { x: 780, top: 455, bottom: 477, ball: 484 },
  { x: 1002, top: 322, bottom: 510, ball: 517 },
];
const front: Col = { x: 746, top: 440, bottom: 625, ball: 633 };

const Column = ({ c }: { c: Col }) => {
  const mid = c.x + 17;
  const right = c.x + 26;
  const cx = c.x + 13;
  return (
    <g>
      <polygon
        points={`${cx - 21},${c.ball + 16} ${cx - 6},${c.ball + 4} ${cx + 6},${c.ball + 4} ${cx + 21},${c.ball + 13} ${cx + 5},${c.ball + 20}`}
        fill="#00ee00"
      />
      <polygon points={`${cx - 21},${c.ball + 16} ${cx - 3},${c.ball + 9} ${cx + 5},${c.ball + 20}`} fill="#00e400" />
      <circle cx={cx} cy={c.ball} r={8} fill="#00ea00" />
      <circle cx={cx} cy={c.ball - 1} r={5.5} fill="#00ff00" />
      <polygon points={`${c.x},${c.top} ${mid},${c.top + 2} ${mid},${c.bottom + 3} ${c.x},${c.bottom}`} fill="#d9d9d9" />
      <polygon points={`${mid},${c.top + 2} ${right},${c.top} ${right},${c.bottom} ${mid},${c.bottom + 3}`} fill="#c0c0c0" />
    </g>
  );
};

const Model = () => (
  <ModelSvg viewBox="227 109 833 757">
    {cols.map((c) => (
      <Column key={c.x} c={c} />
    ))}
    <polygon points="302,307 632,356 632,363 618,364 310,320 310,313" fill="#e9e9e9" />
    <line x1="310" y1="314" x2="623" y2="361" stroke="#111" strokeWidth="1.1" />
    <polygon points="462,235 793,285 632,356 302,307" fill="#d40000" />
    <polygon points="288,314 297,310 308,313 304,316" fill="#c40000" />
    <polygon points="538,400 759,433 759,441 551,413 551,408" fill="#e9e9e9" />
    <line x1="546" y1="408" x2="756" y2="438" stroke="#111" strokeWidth="1.1" />
    <polygon points="759,433 1014,318 1016,324 1012,331 772,441 765,441" fill="#d9d9d9" />
    <polygon points="772,440 1010,335 1010,360 772,465" fill="#8080ff" />
    <polygon points="772,439 1010,332 1015,333 772,443" fill="#5f5fe0" />
    <polygon points="772,466 1010,359 1015,360 772,470" fill="#6464e4" />
    <line x1="768" y1="437" x2="1012" y2="328" stroke="#111" strokeWidth="1.1" />
    <polygon points="793,285 1014,318 759,433 538,400" fill="#5882d8" />
    <polygon points="525,407 533,403 545,406 542,409" fill="#c40000" />
    <Column c={front} />
    <polygon points="746,439 755,437 772,438 763,442" fill="#c40000" />
    <polygon points="1010,325 1015,322 1027,323 1018,327" fill="#c40000" />
  </ModelSvg>
);

const AppIcon = () => (
  <svg width="18" height="18" viewBox="0 0 18 18">
    <path d="M3 6l4-4h9l-2 4-1 10-10 1z" fill="#7b8796" stroke="#3a4450" />
    <path d="M7 2v13M11 2v13" stroke="#aab4c0" />
    <text x="2" y="16" fontSize="12" fontWeight="700" fontFamily="Liberation Sans, sans-serif" fill="#e0a020">
      5
    </text>
  </svg>
);

const Logo = () => (
  <svg width="20" height="15" viewBox="0 0 20 15">
    <rect width="20" height="15" fill="#0e2a66" />
    <path d="M0 9h20v2H0zM10 1L3 9h2l5-5 5 5h2z" fill="#fff" />
    <path d="M8 11v4h4v-4z" fill="#fff" opacity=".8" />
  </svg>
);

const menu: [React.ReactNode, number][] = [
  [<><u>S</u>oubor</>, 53],
  [<>Ú<u>p</u>ravy</>, 50],
  [<><u>Z</u>obrazit</>, 57],
  [<>Vlo<u>ž</u>it</>, 44],
  [<>V<u>ý</u>počet</>, 56],
  [<>Výsled<u>k</u>y</>, 59],
  [<>Nástro<u>j</u>e</>, 58],
  [<><u>T</u>abulka</>, 56],
  [<>Nasta<u>v</u>ení</>, 65],
  [<>Př<u>í</u>davné moduly</>, 100],
  [<><u>O</u>kno</>, 44],
  [<><u>N</u>ápověda</>, 60],
];

const Data = () => (
  <svg width="17" height="17" viewBox="0 0 17 17">
    <path d="M1 2h13v10H1z" fill="#fff" stroke="#3a74c0" />
    <rect x="1" y="2" width="13" height="2.500" fill="#3a74c0" />
    <path d="M3 7h5v4H3z" fill="#f0c040" stroke="#8a6a20" strokeWidth=".6" />
    <circle cx="10" cy="10" r="3" fill="#e8eef8" stroke="#444" />
    <path d="M12 12l3 3" stroke="#a06020" strokeWidth="1.6" />
  </svg>
);
const Disp = () => (
  <svg width="17" height="17" viewBox="0 0 17 17">
    <path d="M2 5h13v11H2z" fill="#fff" stroke="#2c62b0" />
    <path d="M4 8h9M4 10.500h9M4 13h9" stroke="#2c62b0" />
    <path d="M3 4l5-3 7 1-2 3H5z" fill="#8a6a50" stroke="#433" strokeWidth=".5" />
  </svg>
);
const Views = () => (
  <svg width="17" height="17" viewBox="0 0 17 17">
    <path d="M9 1l3 2-4 8-3-2z" fill="#6a90d8" stroke="#2c4a90" strokeWidth=".7" />
    <path d="M3 15h11M12 15c2-3 1-7-2-9" fill="none" stroke="#3a5ca8" strokeWidth="1.3" />
    <path d="M5 12l3-1-1 4z" fill="#3a5ca8" />
  </svg>
);

export default function App() {
  return (
    <Page>
      <Global />
      <TitleBar>
        <AppIcon />
        <TitleText>RFEM 5.26.00 x64 - [000773]</TitleText>
        <WinButtons>
          <WinButton>
            <svg width="12" height="12">
              <path d="M1 6.500h10" stroke="#111" />
            </svg>
          </WinButton>
          <WinButton>
            <svg width="12" height="12">
              <rect x="1.500" y="1.500" width="9" height="9" fill="none" stroke="#111" />
            </svg>
          </WinButton>
          <WinButton>
            <svg width="12" height="12">
              <path d="M1 1l10 10M11 1L1 11" stroke="#111" />
            </svg>
          </WinButton>
        </WinButtons>
      </TitleBar>
      <MenuBar>
        <MenuLogo>
          <Logo />
        </MenuLogo>
        {menu.map(([t, w], i) => (
          <MenuItem key={i} $w={w}>
            {t}
          </MenuItem>
        ))}
        <MdiControls>
          <svg width="10" height="10">
            <path d="M1 8h8" stroke="#8a919c" strokeWidth="2" />
          </svg>
          <svg width="10" height="10">
            <path d="M1 3h6v6H1zM3 1h6v6" fill="none" stroke="#8a919c" />
          </svg>
          <svg width="10" height="10">
            <path d="M1 1l8 8M9 1l-8 8" stroke="#8a919c" strokeWidth="1.800" />
          </svg>
        </MdiControls>
      </MenuBar>
      <ToolRowView bands={r1} />
      <ToolRowView bands={r2} />
      <Body>
        <LeftCol>
          <DockPanel>
            <DockHeader $pad={1}>
              <DockTitle>Navigátor projektu - Zobrazit</DockTitle>
              <Pin />
              <Close />
            </DockHeader>
            <TreeArea>
              <Tree>
                {nodes.map((n) => (
                  <TreeNode key={n.label} n={n} />
                ))}
              </Tree>
              <VScroll>
                <ScrollBtn>
                  <Chev d="M1 6l3.500-3.500L8 6" />
                </ScrollBtn>
                <VSpace />
                <ScrollThumb />
                <ScrollBtn>
                  <Chev d="M1 3l3.500 3.500L8 3" />
                </ScrollBtn>
              </VScroll>
            </TreeArea>
            <HScroll>
              <HBtn>
                <Chev d="M6 1L2.500 4.500 6 8" />
              </HBtn>
              <HThumb />
              <HSpace />
              <HBtn>
                <Chev d="M3 1l3.500 3.500L3 8" />
              </HBtn>
            </HScroll>
          </DockPanel>
          <TabStrip>
            <Tab $w={52}>
              <Data />
              Data
            </Tab>
            <Tab $w={66} $active>
              <Disp />
              Zobrazit
            </Tab>
            <Tab $w={66} $ml={5}>
              <Views />
              Pohledy
            </Tab>
          </TabStrip>
        </LeftCol>
        <Canvas>
          <Model />
        </Canvas>
        <RightCol>
          <DockHeader $pad={3}>
            <DockTitle>Panel</DockTitle>
            <Pin />
            <Close />
          </DockHeader>
          <PanelBody>
            <PanelCaption>Strany plochy</PanelCaption>
            <LegendBox>
              <LegendRow>
                <Swatch $c="#6699ff" />
                Strana +
              </LegendRow>
              <LegendRow>
                <Swatch $c="#ff0000" />
                Strana -
              </LegendRow>
            </LegendBox>
            <PanelAction>
              <svg width="20" height="16" viewBox="0 0 20 16">
                <rect x="1" y="1" width="7" height="12" rx="2" fill="#b08a5a" stroke="#333" />
                <path d="M10 3h6l2 2v10h-8z" fill="#fff" stroke="#666" />
                <path d="M12 8h4M12 10h4M12 12h4" stroke="#888" />
              </svg>
            </PanelAction>
          </PanelBody>
          <PanelTab>
            <svg width="14" height="15" viewBox="0 0 14 15">
              <rect x="0.500" y="1" width="13" height="3.500" fill="#0000ee" stroke="#555" strokeWidth=".5" />
              <rect x="0.500" y="6" width="13" height="3.500" fill="#00dd00" stroke="#555" strokeWidth=".5" />
              <rect x="0.500" y="11" width="13" height="3.500" fill="#ee0000" stroke="#555" strokeWidth=".5" />
            </svg>
          </PanelTab>
        </RightCol>
      </Body>
      <StatusBar>
        <StatusText>Hotovo</StatusText>
        <Pane $w={46} $on>UCHOP</Pane>
        <Pane $w={43}>RASTR</Pane>
        <Pane $w={50} $on>KARTEZ</Pane>
        <Pane $w={56}>OUCHOP</Pane>
        <Pane $w={41} $on>VLINIE</Pane>
        <Pane $w={28} $on>DXF</Pane>
        <StatusSlot $w={190} />
        <StatusSlot $w={88} />
        <StatusSlot $w={74} />
        <StatusSlot $w={74} />
        <ResizeGrip width="12" height="12">
          <path d="M9 2h2v2H9zM5 6h2v2H5zM9 6h2v2H9zM1 10h2v2H1zM5 10h2v2H5zM9 10h2v2H9z" fill="#7a808c" />
        </ResizeGrip>
      </StatusBar>
      <Highlight />
    </Page>
  );
}
